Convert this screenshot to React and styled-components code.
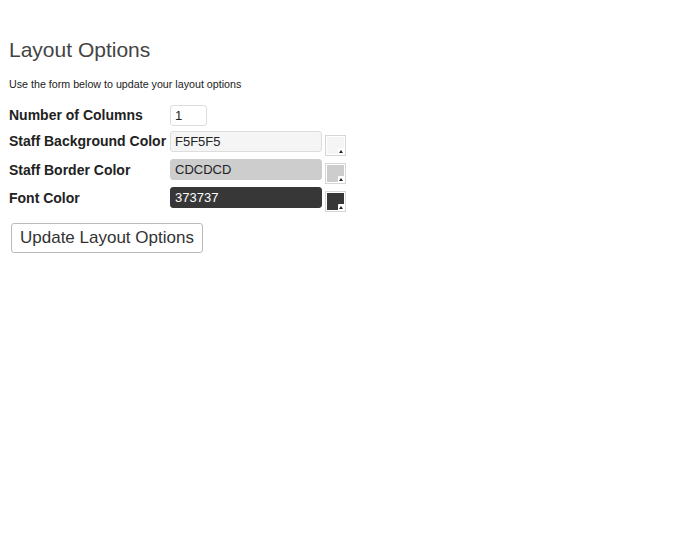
import styled, { createGlobalStyle } from "styled-components"

const GlobalStyle = createGlobalStyle`
    body {
        margin: 0;
        background: #fff;
        font-family: "Liberation Sans", Arial, sans-serif;
        color: #222;
    }
`;

const Page = styled.div`
    padding: 38px 9px 0 9px;
`;

const Title = styled.h1`
    margin: 0;
    font-size: 21px;
    line-height: 24px;
    font-weight: normal;
    color: #444;
`;

const Intro = styled.p`
    margin: 16px 0 14px 0;
    font-size: 10.7px;
    line-height: 13px;
    color: #222;
`;

const Form = styled.div`
    display: flex;
    flex-direction: column;
`;

const Row = styled.div`
    display: flex;
    align-items: flex-start;
    margin-bottom: ${(p) => p.gap || 3}px;
`;

const Label = styled.label`
    width: 161px;
    font-size: 14px;
    line-height: 21px;
    padding-top: ${(p) => (p.low ? 1 : 0)}px;
    font-weight: bold;
    color: #222;
`;

const Input = styled.div`
    box-sizing: border-box;
    width: ${(p) => p.width}px;
    height: 21px;
    padding: 0 4px;
    font-size: 13px;
    line-height: 19px;
    border: 1px solid ${(p) => p.border || "#ddd"};
    border-radius: 3px;
    background: ${(p) => p.bg || "#fff"};
    color: ${(p) => p.fg || "#222"};
`;

const Swatch = styled.div`
    position: relative;
    box-sizing: border-box;
    width: 21px;
    height: 21px;
    margin: 4px 0 0 3px;
    border: 1px solid #d6d6d6;
    background: #fff;
    padding: 1px;

    &::before {
        content: "";
        display: block;
        width: 100%;
        height: 100%;
        background: ${(p) => p.color};
    }

    &::after {
        content: "";
        position: absolute;
        right: 1px;
        bottom: 1px;
        width: 6px;
        height: 6px;
        background: #fff;
        border-top-left-radius: 1px;
    }
`;

const Arrow = styled.span`
    position: absolute;
    right: 2px;
    bottom: 2px;
    width: 0;
    height: 0;
    z-index: 1;
    border-left: 2px solid transparent;
    border-right: 2px solid transparent;
    border-bottom: 3px solid #222;
`;

const Button = styled.button`
    margin: 8px 0 0 2px;
    height: 30px;
    padding: 0 8px;
    font-family: "Liberation Sans", Arial, sans-serif;
    font-size: 17px;
    color: #333;
    background: #fff;
    border: 1px solid #bbb;
    border-radius: 3px;
    align-self: flex-start;
`;

const colors = [
    { label: "Staff Background Color", value: "F5F5F5", bg: "#f5f5f5", border: "#ddd", fg: "#222", swatch: "#f5f5f5" },
    { label: "Staff Border Color", value: "CDCDCD", bg: "#cdcdcd", border: "#cdcdcd", fg: "#222", swatch: "#cdcdcd", low: true },
    { label: "Font Color", value: "373737", bg: "#373737", border: "#373737", fg: "#fff", swatch: "#373737", low: true },
];

function App() {
    return (
        <Page>
            <GlobalStyle />
            <Title>Layout Options</Title>
            <Intro>Use the form below to update your layout options</Intro>
            <Form>
                <Row gap={5}>
                    <Label>Number of Columns</Label>
                    <Input width={37}>1</Input>
                </Row>
                {colors.map((c) => (
                    <Row key={c.label}>
                        <Label low={c.low}>{c.label}</Label>
                        <Input width={152} bg={c.bg} border={c.border} fg={c.fg}>
                            {c.value}
                        </Input>
                        <Swatch color={c.swatch}>
                            <Arrow />
                        </Swatch>
                    </Row>
                ))}
                <Button>Update Layout Options</Button>
            </Form>
        </Page>
    );
}

export default App;
